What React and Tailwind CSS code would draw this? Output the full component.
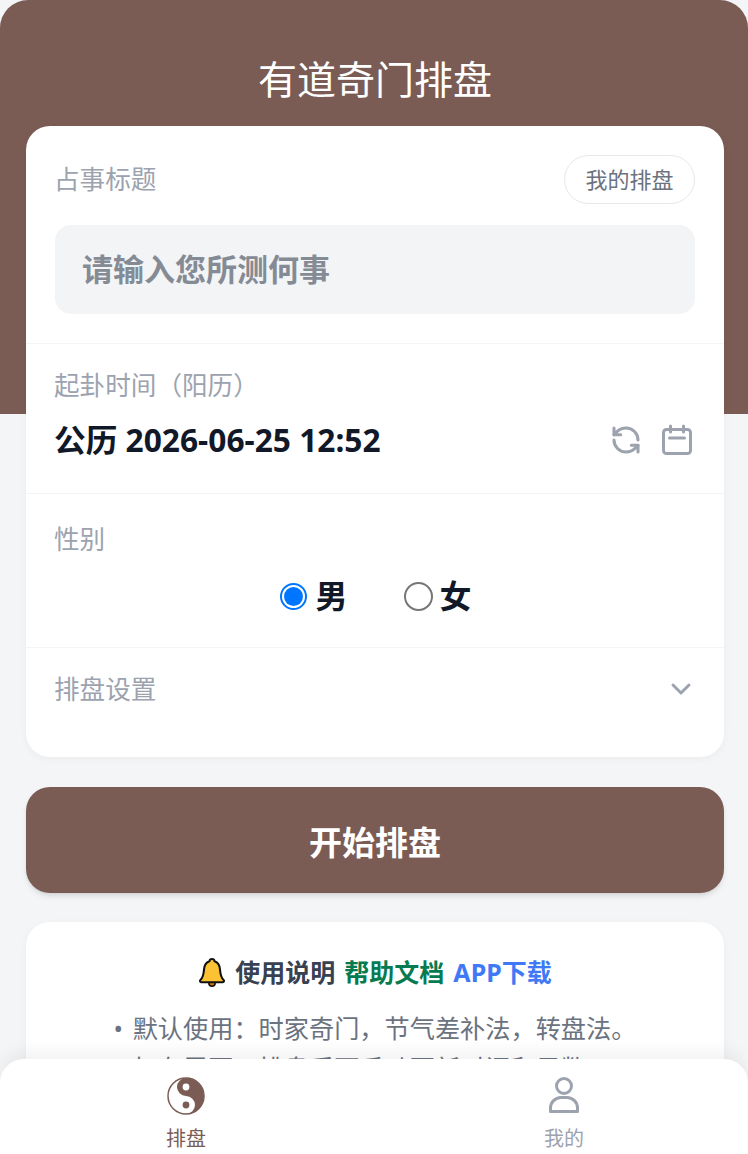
import { ChevronDown, RefreshCcw } from 'lucide-react';

const brown = '#7a5c55';

function TaijiIcon() {
  return (
    <svg width="38" height="38" viewBox="0 0 38 38">
      <circle cx="19" cy="19" r="18" fill="#fff" stroke={brown} strokeWidth="1.5" />
      <path d="M19 1a18 18 0 0 1 0 36a9 9 0 0 0 0-18a9 9 0 0 1 0-18z" fill={brown} />
      <circle cx="19" cy="10" r="3.4" fill="#fff" />
      <circle cx="19" cy="28" r="3.4" fill={brown} />
    </svg>
  );
}

function UserIcon() {
  return (
    <svg width="32" height="36" viewBox="0 0 32 36" fill="none" stroke="#9ca3af" strokeWidth="3" strokeLinejoin="round">
      <circle cx="16" cy="9" r="7.500" />
      <path d="M2.500 34.500v-3.500a10.500 10.500 0 0 1 10.500-10.500h6a10.500 10.500 0 0 1 10.500 10.500v3.500z" />
    </svg>
  );
}

function CalendarIcon() {
  return (
    <svg width="32" height="32" viewBox="0 0 32 32" fill="none" stroke="#9ca3af" strokeWidth="3" strokeLinecap="round">
      <rect x="2.500" y="5.500" width="27" height="24" rx="3" />
      <path d="M9.500 2v6M22.500 2v6M8.500 14h15" />
    </svg>
  );
}

function BellIcon() {
  return (
    <svg width="28" height="30" viewBox="0 0 28 30">
      <circle cx="14" cy="26" r="3.200" fill="#d97706" stroke="#111" strokeWidth="1.500" />
      <path d="M14 2c-1.600 0-2.400 1-2.600 2.300C7.800 5.500 6.300 8.500 6 12.500c-.3 4.500-1 8-3.600 10.500-.8.800-.3 2.200.8 2.200h21.600c1.100 0 1.600-1.400.8-2.200C23 20.500 22.300 17 22 12.500c-.3-4-1.800-7-5.400-8.200C16.400 3 15.600 2 14 2z" fill="#fcc233" stroke="#111" strokeWidth="2.100" strokeLinejoin="round" />
    </svg>
  );
}

export default function App() {
  return (
    <div className="relative h-[1154px] overflow-hidden bg-[#f4f5f7] font-['Noto_Sans','Noto_Sans_CJK_SC',sans-serif]">
      {/* brown header block behind the form card */}
      <div className="absolute inset-x-0 top-0 h-[414px] rounded-t-[28px] bg-[#7a5c55]" />

      <div className="relative pr-[24px] pl-[26px]">
        <h1 className="flex h-[126px] items-center justify-center pt-[31px] text-[39px] leading-[54px] font-normal text-white">有道奇门排盘</h1>

        <div className="h-[631px] rounded-[24px] bg-white shadow-[0_2px_8px_rgba(0,0,0,0.04)]">
          <div className="border-b border-[#f3f4f6] px-[29px] py-[29px]">
            <div className="flex items-center justify-between">
              <span className="ml-[-1px] text-[25.6px] leading-[36px] text-[#9ca3af]">占事标题</span>
              <button className="flex h-[49px] w-[131px] items-center justify-center rounded-full border border-[#e5e7eb] pb-[2px] text-[22px] leading-[30px] text-[#6b7280]">我的排盘</button>
            </div>
            <div className="mt-[21px] flex h-[89px] items-center rounded-[16px] bg-[#f3f4f6] px-[27px] pb-[2px] text-[31px] leading-[44px] font-bold text-[#858b95]">请输入您所测何事</div>
          </div>

          <div className="h-[150px] border-b border-[#f3f4f6] px-[28px] pt-[24px]">
            <div className="text-[25.6px] leading-[36px] text-[#9ca3af]">起卦时间（阳历）</div>
            <div className="mt-[14px] flex items-center justify-between">
              <span className="text-[31.7px] leading-[44px] font-bold text-[#111827]">公历 2026-06-25 12:52</span>
              <div className="flex items-center gap-[19px] pr-[3px]">
                <RefreshCcw size={32} strokeWidth={2.3} color="#9ca3af" />
                <CalendarIcon />
              </div>
            </div>
          </div>

          <div className="h-[154px] border-b border-[#f3f4f6] px-[28px] pt-[28px]">
            <div className="text-[25.6px] leading-[36px] text-[#9ca3af]">性别</div>
            <div className="mt-[16px] ml-[2px] flex items-center justify-center gap-[56px]">
              <label className="flex items-center gap-[8px] text-[32px] leading-[44px] font-bold text-[#111827]">
                <span className="flex size-[27px] items-center justify-center rounded-full border-2 border-[#0075ff]">
                  <span className="size-[19px] rounded-full bg-[#0075ff]" />
                </span>
                男
              </label>
              <label className="flex items-center gap-[7px] text-[32px] leading-[44px] font-bold text-[#111827]">
                <span className="size-[29px] rounded-full border-2 border-[#767676]" />
                女
              </label>
            </div>
          </div>

          <div className="flex items-center justify-between px-[28px] pt-[24px]">
            <span className="text-[25.6px] leading-[36px] text-[#9ca3af]">排盘设置</span>
            <ChevronDown size={32} strokeWidth={2.2} color="#9ca3af" className="mt-[-2px] mr-[-1px]" />
          </div>
        </div>

        <button className="mt-[30px] flex h-[106px] w-full items-center justify-center rounded-[24px] bg-[#7a5c55] pt-[5px] text-[33px] leading-[46px] font-bold text-white shadow-md">开始排盘</button>

        <div className="mt-[29px] h-[300px] rounded-[24px] bg-white pt-[32px] shadow-[0_2px_8px_rgba(0,0,0,0.04)]">
          <div className="flex items-center justify-center gap-[9px] text-[25px] leading-[36px] font-bold">
            <BellIcon />
            <span className="text-[#374151]">使用说明</span>
            <span className="text-[#067a50]">帮助文档</span>
            <span className="text-[#4079f6]">APP下载</span>
          </div>
          <div className="mx-auto mt-[20px] w-fit text-[25.2px] leading-[36px] text-[#6b7280]">
            <p><span className="mr-[3px]">•</span> 默认使用：时家奇门，节气差补法，转盘法。</p>
            <p className="mt-[4px]"><span className="mr-[3px]">•</span> 如有需要，排盘后可手动更新时间和局数。</p>
          </div>
        </div>
      </div>

      {/* bottom tab bar */}
      <nav className="absolute inset-x-0 bottom-0 flex h-[95px] justify-between rounded-t-[24px] bg-white pr-[144px] pl-[146px] pt-[18px] shadow-[0_-8px_16px_rgba(0,0,0,0.05)]">
        <div className="flex w-[80px] flex-col items-center">
          <TaijiIcon />
          <span className="mt-[10px] text-[20px] leading-[28px] text-[#7a5c55]">排盘</span>
        </div>
        <div className="flex w-[80px] flex-col items-center">
          <UserIcon />
          <span className="mt-[12px] text-[20px] leading-[28px] text-[#9ca3af]">我的</span>
        </div>
      </nav>
    </div>
  );
}
